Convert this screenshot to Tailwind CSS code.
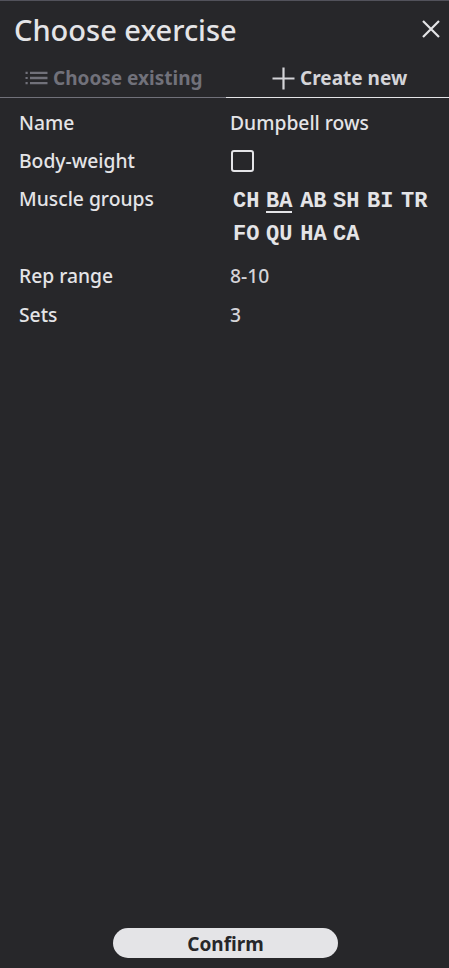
<!DOCTYPE html>
<html lang="en">
<head>
<meta charset="utf-8">
<title>Choose exercise</title>
<script src="https://cdn.jsdelivr.net/npm/@tailwindcss/browser@4"></script>
</head>
<body class="bg-[#27272a]">
<main class="flex h-[968px] w-[449px] flex-col overflow-hidden border-t border-[#52525b] bg-[#27272a] font-['Noto_Sans',sans-serif] text-[19.3px] leading-[26px] font-medium text-[#e4e4e7]">
  <header class="flex h-[58px] items-center justify-between pl-[14px] pr-[9px]">
    <h1 class="text-[29px] leading-[40px] font-medium">Choose exercise</h1>
    <svg class="mb-[2px] size-[18px]" viewBox="0 0 18 18" fill="none" stroke="currentColor" stroke-width="2.2"><path d="M1 1l16 16M17 1L1 17"/></svg>
  </header>
  <nav class="flex h-[39px] text-[19px] font-bold">
    <button class="flex w-[226px] items-center gap-[5px] border-b border-[#71717a] pl-[25px] text-[#71717a]">
      <svg class="h-[14px] w-[23px]" viewBox="0 0 23 14" fill="currentColor"><path d="M.5 .8h2.2v2.2H.5zM.5 5.9h2.2v2.2H.5zM.5 11h2.2v2.2H.5zM5 .7h17.5v2.4H5zM5 5.8h17.5v2.4H5zM5 10.9h17.5v2.4H5z"/></svg>
      <span>Choose existing</span>
    </button>
    <button class="flex flex-1 items-center gap-[5px] border-b border-[#e4e4e7] pl-[46px] text-[#d4d4d8]">
      <svg class="size-[23px]" viewBox="0 0 23 23" fill="none" stroke="currentColor" stroke-width="2.2"><path d="M11.5 .5v22M.5 11.5h22"/></svg>
      <span>Create new</span>
    </button>
  </nav>
  <section class="grid grid-cols-[211px_1fr] grid-rows-[38px_38px_77px_39px_38px] pt-[12px] pl-[19px]">
    <span>Name</span><span>Dumpbell rows</span>
    <span>Body-weight</span>
    <span class="mt-[2px] ml-[1px] h-[22px] w-[23px] rounded-[3px] border-[2.4px] border-[#e4e4e7]"></span>
    <span>Muscle groups</span>
    <div class="flex flex-wrap content-start gap-x-[7.2px] gap-y-[7px] pt-[3px] pl-[3px] font-['Liberation_Mono',monospace] text-[22px] leading-[26px] font-bold">
      <span class="w-[26.4px]">CH</span><span class="relative -left-[0.5px] w-[26.4px]">BA<i class="absolute left-0 bottom-[2px] h-[2px] w-[26px] bg-[#e4e4e7]"></i></span><span>AB</span><span class="relative -left-[0.7px]">SH</span><span class="relative -left-[0.4px]">BI</span><span>TR</span><span>FO</span><span class="relative -left-[0.5px]">QU</span><span>HA</span><span class="relative -left-[0.7px]">CA</span>
    </div>
    <span>Rep range</span><span class="text-[#d4d4d8]">8-10</span>
    <span>Sets</span><span class="text-[#d4d4d8]">3</span>
  </section>
  <button class="mt-auto mb-[10px] ml-[113px] h-[30px] w-[225px] shrink-0 rounded-[15px] bg-[#e4e4e7] pt-[2px] text-[19px] leading-[28px] font-bold text-[#27272a]">Confirm</button>
</main>
</body>
</html>
